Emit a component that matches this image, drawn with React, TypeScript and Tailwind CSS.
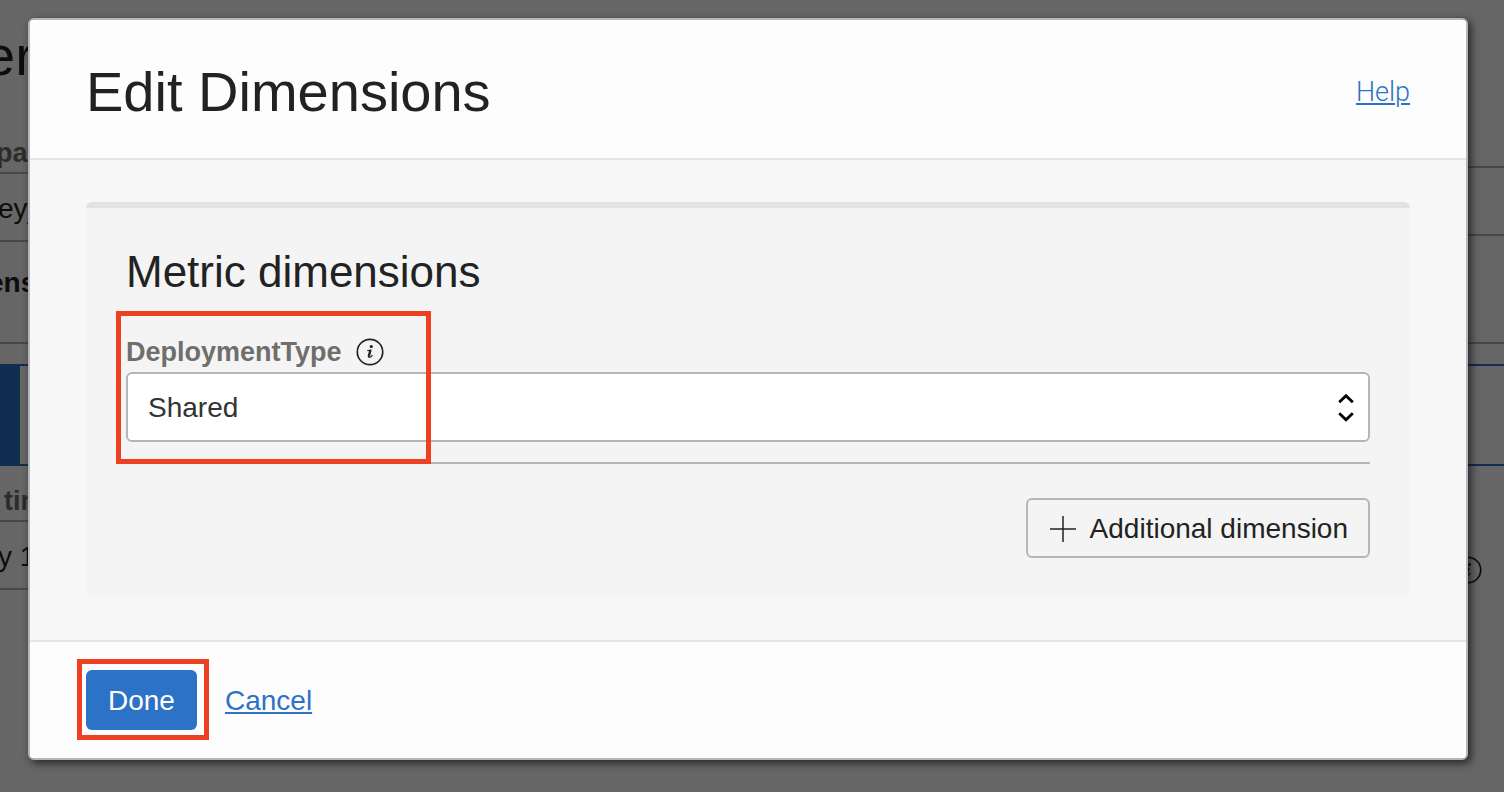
import React from "react";

function InfoIcon() {
  return (
    <svg className="size-7 shrink-0" viewBox="0 0 28 28" fill="none" stroke="currentColor" aria-hidden="true">
      <circle cx="14" cy="14" r="12.7" strokeWidth="1.7" />
      <circle cx="15.300" cy="8.500" r="1.600" fill="currentColor" stroke="none" />
      <path d="M11.300 12.500Q13.200 12.700 15.300 11.700" strokeWidth="1.200" />
      <path d="M14.500 12.200L13 17.400Q12.600 19 13.600 19" strokeWidth="2.300" />
      <path d="M13.300 19.400Q15.200 19.200 16.400 17" strokeWidth="1.200" />
    </svg>
  );
}

function UpDownIcon() {
  return (
    <svg className="h-8 w-4" viewBox="0 0 16 32" fill="none" stroke="#000" strokeWidth="2.800" aria-hidden="true">
      <path d="M1.200 11.200L8 4.700L14.800 11.200" />
      <path d="M1.200 22.300L8 28.800L14.800 22.300" />
    </svg>
  );
}

function PlusIcon() {
  return (
    <svg className="size-[26px] shrink-0" viewBox="0 0 26 26" fill="none" stroke="currentColor" strokeWidth="1.5" aria-hidden="true">
      <path d="M13 0V26M0 13H26" />
    </svg>
  );
}

function Backdrop() {
  return (
    <div className="absolute inset-0 overflow-hidden bg-white text-[28px] whitespace-nowrap text-[#222]" aria-hidden="true">
      <div className="h-[136px] pt-6 -indent-4 text-[56px] leading-[64px]">er</div>
      <div className="flex h-[106px] justify-between">
        <div className="w-1/2">
          <div className="h-9 -indent-1 text-[27px] font-bold leading-[34px] text-[#6f6e6b]">pa</div>
          <div className="h-[70px] border-y-2 border-[#aeb3b9] -indent-0.5 leading-[70px]">ey_</div>
        </div>
        <div className="w-1/3 pt-[30px]">
          <div className="h-[70px] border-y-2 border-[#aeb3b9]" />
        </div>
      </div>
      <div className="h-[102px] border-b-2 border-[#aeb3b9] -indent-3 font-bold leading-[82px]">ens</div>
      <div className="mt-5 h-[102px] border-y-2 border-l-20 border-[#2c72c7]" />
      <div className="flex justify-between">
        <div className="w-1/2">
          <div className="h-[54px] pl-1 text-[27px] font-bold leading-[70px] text-[#6f6e6b]">tim</div>
          <div className="h-[70px] border-y-2 border-[#aeb3b9] -indent-0.5 leading-[70px]">y 1</div>
        </div>
        <div className="pt-[90px] pr-[22px]">
          <InfoIcon />
        </div>
      </div>
      <div className="absolute inset-0 bg-black/60" />
    </div>
  );
}

export default function App() {
  return (
    <div className="relative min-h-screen pt-[18px] pr-9 pb-8 pl-7 font-['Liberation_Sans',Arial,sans-serif] text-[28px] leading-8 text-[#222]">
      <Backdrop />
      <div
        role="dialog"
        aria-modal="true"
        aria-labelledby="dialog-title"
        className="relative rounded-md border-2 border-[#b2b7bd] bg-[#f7f7f7] shadow-[3px_3px_8px_0_rgba(0,0,0,0.65)]"
      >
        <header className="flex items-center justify-between rounded-t border-b-2 border-[#e5e5e5] bg-[#fdfdfd] px-14 pt-10 pb-[34px]">
          <h1 id="dialog-title" className="text-[56px] leading-[64px]">Edit Dimensions</h1>
          <a href="#help" className="font-['Roboto',sans-serif] text-[27px] font-light text-[#2c72c7] underline decoration-2 underline-offset-2">
            Help
          </a>
        </header>

        <main className="px-14 py-[42px]">
          <section className="rounded-md border-t-6 border-[#e1e2e6] bg-[#f4f4f4] px-10 pt-9 pb-10">
            <h2 className="text-[44px] leading-[56px]">Metric dimensions</h2>
            <div className="relative mt-9 border-b-2 border-[#b2b7bd] pb-5">
              <div className="mb-1 flex h-8 items-center gap-3.5">
                <label htmlFor="deployment-type" className="text-[27px] font-bold text-[#6f6e6b]">
                  DeploymentType
                </label>
                <InfoIcon />
              </div>
              <div className="relative">
                <select
                  id="deployment-type"
                  className="block h-[70px] w-full appearance-none rounded-md border-2 border-[#b2b7bd] bg-white pt-0.5 pr-14 pl-5 text-[#333]"
                >
                  <option>Shared</option>
                </select>
                <span className="pointer-events-none absolute inset-y-0 right-4 flex items-center">
                  <UpDownIcon />
                </span>
              </div>
              <div className="pointer-events-none absolute -top-[25px] -bottom-0.5 -left-2.5 w-[315px] border-5 border-[#ed4023]" />
            </div>
            <div className="mt-[34px] flex justify-end">
              <button type="button" className="flex h-[60px] items-center gap-3.5 rounded-md border-2 border-[#b2b7bd] pt-0.5 pr-5 pl-[22px]">
                <PlusIcon />
                Additional dimension
              </button>
            </div>
          </section>
        </main>

        <footer className="flex items-center gap-7 rounded-b border-t-2 border-[#e5e5e5] bg-[#fdfdfd] px-14 py-7">
          <div className="relative">
            <button type="button" className="h-[60px] rounded-md bg-[#2c72c7] px-[22px] pt-0.5 text-white">Done</button>
            <div className="pointer-events-none absolute -top-[11px] -right-3 -bottom-2.5 -left-[9px] border-5 border-[#ed4023]" />
          </div>
          <a href="#cancel" className="pt-0.5 text-[#2c72c7] underline decoration-2 underline-offset-2">Cancel</a>
        </footer>
      </div>
    </div>
  );
}
